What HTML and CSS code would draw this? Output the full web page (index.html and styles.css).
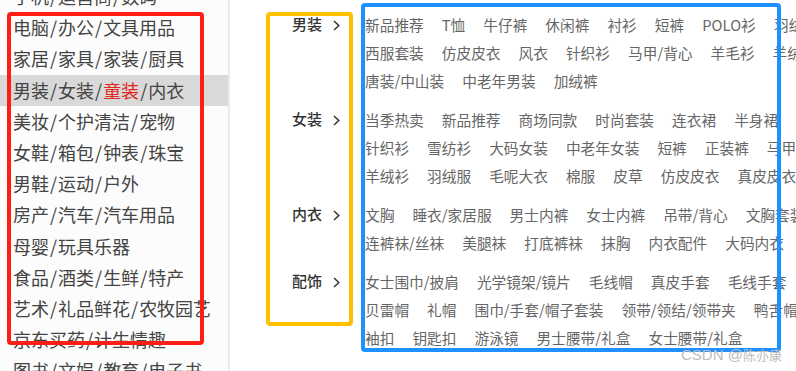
FILE: index.html
```html
<!DOCTYPE html>
<html lang="zh-CN">
<head>
<meta charset="utf-8">
<title>分类</title>
<link rel="stylesheet" href="styles.css">
</head>
<body>
<div class="page">
  <aside class="sidebar">
    <ul class="cats">
      <li><a>手机</a><span class="sep">/</span><a>运营商</a><span class="sep">/</span><a>数码</a></li>
      <li><a>电脑</a><span class="sep">/</span><a>办公</a><span class="sep">/</span><a>文具用品</a></li>
      <li><a>家居</a><span class="sep">/</span><a>家具</a><span class="sep">/</span><a>家装</a><span class="sep">/</span><a>厨具</a></li>
      <li class="active"><a>男装</a><span class="sep">/</span><a>女装</a><span class="sep">/</span><a class="hot">童装</a><span class="sep">/</span><a>内衣</a></li>
      <li><a>美妆</a><span class="sep">/</span><a>个护清洁</a><span class="sep">/</span><a>宠物</a></li>
      <li><a>女鞋</a><span class="sep">/</span><a>箱包</a><span class="sep">/</span><a>钟表</a><span class="sep">/</span><a>珠宝</a></li>
      <li><a>男鞋</a><span class="sep">/</span><a>运动</a><span class="sep">/</span><a>户外</a></li>
      <li><a>房产</a><span class="sep">/</span><a>汽车</a><span class="sep">/</span><a>汽车用品</a></li>
      <li><a>母婴</a><span class="sep">/</span><a>玩具乐器</a></li>
      <li><a>食品</a><span class="sep">/</span><a>酒类</a><span class="sep">/</span><a>生鲜</a><span class="sep">/</span><a>特产</a></li>
      <li><a>艺术</a><span class="sep">/</span><a>礼品鲜花</a><span class="sep">/</span><a>农牧园艺</a></li>
      <li><a>京东买药</a><span class="sep">/</span><a>计生情趣</a></li>
      <li><a>图书</a><span class="sep">/</span><a>文娱</a><span class="sep">/</span><a>教育</a><span class="sep">/</span><a>电子书</a></li>
    </ul>
  </aside>
  <section class="panel">
    <dl class="group">
      <dt>男装<svg class="chev" width="7" height="11" viewBox="0 0 7 11"><polyline points="1,1 5.8,5.5 1,10" fill="none" stroke="#333" stroke-width="1.5"/></svg></dt>
      <dd>
        <div class="row"><a>新品推荐</a><a>T恤</a><a>牛仔裤</a><a>休闲裤</a><a>衬衫</a><a>短裤</a><a>POLO衫</a><a>羽绒服</a></div>
        <div class="row"><a>西服套装</a><a>仿皮皮衣</a><a>风衣</a><a>针织衫</a><a>马甲/背心</a><a>羊毛衫</a><a>羊绒衫</a></div>
        <div class="row"><a>唐装/中山装</a><a>中老年男装</a><a>加绒裤</a></div>
      </dd>
    </dl>
    <dl class="group">
      <dt>女装<svg class="chev" width="7" height="11" viewBox="0 0 7 11"><polyline points="1,1 5.8,5.5 1,10" fill="none" stroke="#333" stroke-width="1.5"/></svg></dt>
      <dd>
        <div class="row"><a>当季热卖</a><a>新品推荐</a><a>商场同款</a><a>时尚套装</a><a>连衣裙</a><a>半身裙</a></div>
        <div class="row"><a>针织衫</a><a>雪纺衫</a><a>大码女装</a><a>中老年女装</a><a>短裤</a><a>正装裤</a><a>马甲</a></div>
        <div class="row"><a>羊绒衫</a><a>羽绒服</a><a>毛呢大衣</a><a>棉服</a><a>皮草</a><a>仿皮皮衣</a><a>真皮皮衣</a></div>
      </dd>
    </dl>
    <dl class="group">
      <dt>内衣<svg class="chev" width="7" height="11" viewBox="0 0 7 11"><polyline points="1,1 5.8,5.5 1,10" fill="none" stroke="#333" stroke-width="1.5"/></svg></dt>
      <dd>
        <div class="row"><a>文胸</a><a>睡衣/家居服</a><a>男士内裤</a><a>女士内裤</a><a>吊带/背心</a><a>文胸套装</a></div>
        <div class="row"><a>连裤袜/丝袜</a><a>美腿袜</a><a>打底裤袜</a><a>抹胸</a><a>内衣配件</a><a>大码内衣</a></div>
      </dd>
    </dl>
    <dl class="group">
      <dt>配饰<svg class="chev" width="7" height="11" viewBox="0 0 7 11"><polyline points="1,1 5.8,5.5 1,10" fill="none" stroke="#333" stroke-width="1.5"/></svg></dt>
      <dd>
        <div class="row"><a>女士围巾/披肩</a><a>光学镜架/镜片</a><a>毛线帽</a><a>真皮手套</a><a>毛线手套</a></div>
        <div class="row"><a>贝雷帽</a><a>礼帽</a><a>围巾/手套/帽子套装</a><a>领带/领结/领带夹</a><a>鸭舌帽</a></div>
        <div class="row"><a>袖扣</a><a>钥匙扣</a><a>游泳镜</a><a>男士腰带/礼盒</a><a>女士腰带/礼盒</a></div>
      </dd>
    </dl>
  </section>
</div>
<div class="box box-red"></div>
<div class="box box-yellow"></div>
<div class="box box-blue"></div>
<div class="watermark">CSDN @<span class="wm-name">陈亦康</span></div>
</body>
</html>
```

FILE: styles.css
```css
html, body {
  margin: 0;
  padding: 0;
}
body {
  width: 796px;
  height: 371px;
  overflow: hidden;
  position: relative;
  background: #fff;
  font-family: "Noto Sans CJK SC", "Microsoft YaHei", sans-serif;
}
.page {
  display: flex;
  height: 371px;
  overflow: hidden;
}
.sidebar {
  flex: none;
  width: 228px;
  background: #fcfcfc;
  border-right: 2px solid #ececec;
  overflow: hidden;
}
.cats {
  list-style: none;
  margin: -19px 0 0;
  padding: 0;
}
.cats li {
  height: 31.2px;
  line-height: 31.2px;
  padding-left: 13px;
  font-size: 18px;
  color: #444;
  white-space: nowrap;
}
.cats li.active {
  background: #d9d9d9;
}
.cats .sep {
  margin: 0 1px;
}
.cats .hot {
  color: #e1251b;
}
.panel {
  flex: 1;
  min-width: 0;
  padding-top: 11px;
  overflow: hidden;
}
.group {
  display: flex;
  margin: 0 0 11px;
}
.group dt {
  flex: none;
  width: 110px;
  text-align: right;
  font-size: 15px;
  font-weight: 500;
  line-height: 26px;
  color: #333;
}
.chev {
  margin-left: 11px;
  vertical-align: -1px;
}
.group dd {
  margin: 0 0 0 25px;
  font-size: 14.7px;
  line-height: 28px;
  color: #666;
  white-space: nowrap;
}
.row a {
  margin-right: 18px;
}
.box {
  position: absolute;
  box-sizing: border-box;
  border: 4px solid;
  border-radius: 4px;
}
.box-red {
  left: 7px;
  top: 12px;
  width: 197px;
  height: 333px;
  border-color: #ff1e14;
}
.box-yellow {
  left: 266px;
  top: 12px;
  width: 87px;
  height: 314px;
  border-color: #ffc000;
}
.box-blue {
  left: 361px;
  top: 3px;
  width: 420px;
  height: 349px;
  border-color: #1e90ff;
}
.watermark {
  position: absolute;
  left: 681px;
  top: 346px;
  font-family: "Liberation Sans", "Noto Sans CJK SC", sans-serif;
  font-size: 15px;
  line-height: 18px;
  color: #bdbdbd;
  white-space: nowrap;
}
.wm-name {
  font-family: "Noto Sans CJK SC", sans-serif;
  font-size: 13px;
}
```
